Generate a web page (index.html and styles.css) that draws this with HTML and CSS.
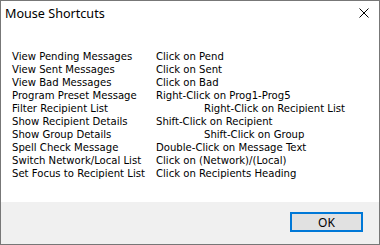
FILE: index.html
```html
<!DOCTYPE html>
<html lang="en">
<head>
    <meta charset="UTF-8">
    <title>Mouse Shortcuts</title>
    <link rel="stylesheet" href="styles.css">
</head>
<body>
    <div class="dialog">
        <div class="titlebar">
            <span class="title">Mouse Shortcuts</span>
            <svg class="close" width="10" height="10" viewBox="0 0 10 10">
                <path d="M0.5 0.5 L9.5 9.5 M9.5 0.5 L0.5 9.5" stroke="#000" stroke-width="1"/>
            </svg>
        </div>
        <div class="content">
            <div class="shortcuts">
                <span>View Pending Messages</span><span>Click on Pend</span>
                <span>View Sent Messages</span><span>Click on Sent</span>
                <span>View Bad Messages</span><span>Click on Bad</span>
                <span>Program Preset Message</span><span>Right-Click on Prog1-Prog5</span>
                <span>Filter Recipient List</span><span class="indent">Right-Click on Recipient List</span>
                <span>Show Recipient Details</span><span>Shift-Click on Recipient</span>
                <span>Show Group Details</span><span class="indent">Shift-Click on Group</span>
                <span>Spell Check Message</span><span>Double-Click on Message Text</span>
                <span>Switch Network/Local List</span><span>Click on (Network)/(Local)</span>
                <span>Set Focus to Recipient List</span><span>Click on Recipients Heading</span>
            </div>
        </div>
        <div class="footer">
            <button class="ok">OK</button>
        </div>
    </div>
</body>
</html>
```
FILE: styles.css
```css
body {
    margin: 0;
    background: #fff;
}
.dialog {
    width: 380px;
    height: 245px;
    box-sizing: border-box;
    border: 1px solid #777;
    display: flex;
    flex-direction: column;
    background: #fff;
}
.titlebar {
    height: 29px;
    display: flex;
    align-items: center;
    justify-content: space-between;
    padding: 0 10px 0 4px;
}
.title {
    font-family: "Noto Sans", sans-serif;
    font-size: 12.6px;
    color: #000;
    margin-top: -5px;
}
.close {
    margin-top: -5px;
}
.content {
    flex: 1;
    padding: 20px 0 0 11px;
}
.shortcuts {
    display: grid;
    grid-template-columns: 144px auto;
    font-family: "DejaVu Sans", sans-serif;
    font-size: 10.1px;
    line-height: 13px;
    color: #000;
}
.indent {
    padding-left: 48px;
}
.footer {
    height: 42px;
    background: #f0f0f0;
    display: flex;
    justify-content: flex-end;
    align-items: flex-start;
    padding: 10px 16px 0 0;
    box-sizing: border-box;
}
.ok {
    width: 73px;
    height: 20px;
    border: 2px solid #0078d7;
    background: #e1e1e1;
    font-family: "Noto Sans", sans-serif;
    font-size: 12px;
    padding: 0;
    color: #000;
}
```
